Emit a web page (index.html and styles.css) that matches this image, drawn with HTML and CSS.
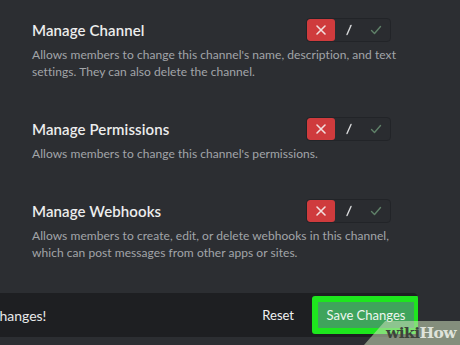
FILE: index.html
```html
<!DOCTYPE html>
<html lang="en">
<head>
    <meta charset="UTF-8">
    <meta name="viewport" content="width=device-width, initial-scale=1.0">
    <title>Channel Permissions</title>
    <link rel="stylesheet" href="styles.css">
</head>
<body>
    <div class="page">
        <div class="perm">
            <div class="perm-head">
                <h3>Manage Channel</h3>
                <div class="toggle">
                    <span class="opt deny">
                        <svg width="12" height="12" viewBox="0 0 12 12"><path d="M2 2L10 10M10 2L2 10" stroke="#f2dede" stroke-width="1.6" stroke-linecap="round"/></svg>
                    </span>
                    <span class="opt">
                        <svg width="10" height="12" viewBox="0 0 10 12"><path d="M7 1.5L3 10.5" stroke="#d8d9db" stroke-width="1.4" stroke-linecap="round"/></svg>
                    </span>
                    <span class="opt">
                        <svg width="12" height="12" viewBox="0 0 12 12"><path d="M1.5 6.5L4.5 9.5L10.5 2.5" fill="none" stroke="#5f8068" stroke-width="1.4" stroke-linecap="round" stroke-linejoin="round"/></svg>
                    </span>
                </div>
            </div>
            <p>Allows members to change this channel's name, description, and text settings. They can also delete the channel.</p>
        </div>

        <div class="perm">
            <div class="perm-head">
                <h3>Manage Permissions</h3>
                <div class="toggle">
                    <span class="opt deny">
                        <svg width="12" height="12" viewBox="0 0 12 12"><path d="M2 2L10 10M10 2L2 10" stroke="#f2dede" stroke-width="1.6" stroke-linecap="round"/></svg>
                    </span>
                    <span class="opt">
                        <svg width="10" height="12" viewBox="0 0 10 12"><path d="M7 1.5L3 10.5" stroke="#d8d9db" stroke-width="1.4" stroke-linecap="round"/></svg>
                    </span>
                    <span class="opt">
                        <svg width="12" height="12" viewBox="0 0 12 12"><path d="M1.5 6.5L4.5 9.5L10.5 2.5" fill="none" stroke="#5f8068" stroke-width="1.4" stroke-linecap="round" stroke-linejoin="round"/></svg>
                    </span>
                </div>
            </div>
            <p>Allows members to change this channel's permissions.</p>
        </div>

        <div class="perm">
            <div class="perm-head">
                <h3>Manage Webhooks</h3>
                <div class="toggle">
                    <span class="opt deny">
                        <svg width="12" height="12" viewBox="0 0 12 12"><path d="M2 2L10 10M10 2L2 10" stroke="#f2dede" stroke-width="1.6" stroke-linecap="round"/></svg>
                    </span>
                    <span class="opt">
                        <svg width="10" height="12" viewBox="0 0 10 12"><path d="M7 1.5L3 10.5" stroke="#d8d9db" stroke-width="1.4" stroke-linecap="round"/></svg>
                    </span>
                    <span class="opt">
                        <svg width="12" height="12" viewBox="0 0 12 12"><path d="M1.5 6.5L4.5 9.5L10.5 2.5" fill="none" stroke="#5f8068" stroke-width="1.4" stroke-linecap="round" stroke-linejoin="round"/></svg>
                    </span>
                </div>
            </div>
            <p>Allows members to create, edit, or delete webhooks in this channel, which can post messages from other apps or sites.</p>
        </div>
    </div>

    <div class="notice">
        <span class="notice-text">Careful — you have unsaved changes!</span>
        <button class="reset">Reset</button>
        <div class="highlight">
            <button class="save">Save Changes</button>
        </div>
    </div>

    <div class="watermark"><span class="wiki">wiki</span><span class="how">How</span></div>
</body>
</html>
```

FILE: styles.css
```css
* {
    margin: 0;
    padding: 0;
    box-sizing: border-box;
}
body {
    width: 460px;
    height: 345px;
    overflow: hidden;
    position: relative;
    background-color: #2c2e32;
    font-family: Lato, "Noto Sans", sans-serif;
}
.page {
    padding: 18px 0 0 32px;
    height: 293px;
}
.perm {
    width: 359px;
    margin-bottom: 37px;
}
.perm-head {
    display: flex;
    align-items: center;
    justify-content: space-between;
    height: 24px;
}
.perm h3 {
    color: #eceded;
    font-size: 15px;
    font-weight: 600;
    letter-spacing: 0.1px;
}
.perm p {
    margin-top: 4px;
    color: #a2a5a9;
    font-size: 12px;
    line-height: 17px;
    width: 374px;
    letter-spacing: 0.05px;
}
.toggle {
    display: flex;
    width: 85px;
    height: 24px;
    border: 1px solid #222428;
    border-radius: 4px;
    background-color: #2a2c30;
    overflow: hidden;
}
.opt {
    flex: 1;
    display: flex;
    align-items: center;
    justify-content: center;
}
.opt.deny {
    background-color: #cf3b3d;
    border-radius: 3px;
}
.notice {
    display: flex;
    align-items: center;
    width: 418px;
    height: 44px;
    background-color: #1e1f22;
    border-radius: 0 5px 5px 0;
    overflow: hidden;
}
.notice-text {
    flex: 1;
    white-space: nowrap;
    margin-left: -183px;
    color: #e8e9ea;
    font-size: 14px;
}
.reset {
    background: none;
    border: none;
    color: #f0f1f2;
    font-family: inherit;
    font-size: 13px;
    margin-right: 18px;
}
.highlight {
    border: 6px solid #1ee61e;
    border-radius: 3px;
    width: 108px;
    height: 38px;
    margin-right: -2px;
}
.save {
    width: 100%;
    height: 100%;
    background-color: #3fa45c;
    border: none;
    color: #eef6ef;
    font-family: inherit;
    font-size: 13px;
}
.watermark {
    position: absolute;
    right: 0;
    bottom: 0;
    width: 96px;
    height: 24px;
    background-color: rgba(205, 222, 185, 0.55);
    clip-path: polygon(22% 0, 100% 0, 100% 100%, 0 100%);
    display: flex;
    justify-content: flex-end;
    align-items: flex-start;
    padding: 4px 4px 0 0;
    font-family: "DejaVu Serif", serif;
    font-weight: bold;
    font-size: 15.5px;
    line-height: 16px;
    letter-spacing: -0.6px;
}
.wiki {
    color: #3d433a;
}
.how {
    color: #dfe3da;
}
```
